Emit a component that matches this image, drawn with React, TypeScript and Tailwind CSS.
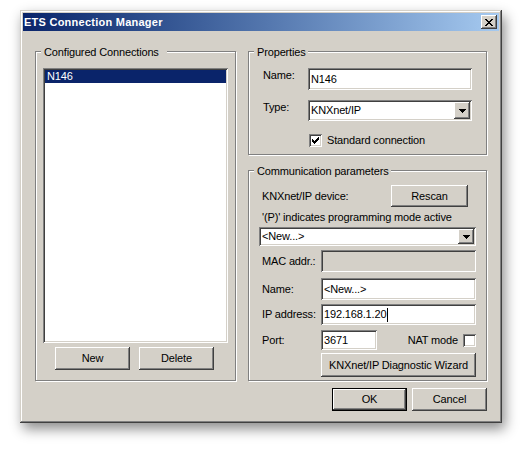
import React from "react";

const sunken =
  "shadow-[inset_1px_1px_0_#808080,inset_-1px_-1px_0_#ffffff,inset_2px_2px_0_#404040,inset_-2px_-2px_0_#d4d0c8]";
const raised =
  "shadow-[inset_-1px_-1px_0_#404040,inset_1px_1px_0_#ffffff,inset_-2px_-2px_0_#808080,inset_2px_2px_0_#d4d0c8]";
const etched =
  "border border-[#808080] shadow-[inset_1px_1px_0_#ffffff,1px_1px_0_#ffffff]";

function Btn({
  children,
  className,
  def,
}: {
  children?: React.ReactNode;
  className: string;
  def?: boolean;
}) {
  return (
    <div
      className={`bg-[#d4d0c8] ${def ? "border border-black" : ""} ${className}`}
    >
      <div
        className={`w-full h-full flex items-center justify-center whitespace-nowrap ${raised}`}
      >
        {children}
      </div>
    </div>
  );
}

function Field({
  children,
  className,
  disabled,
}: {
  children?: React.ReactNode;
  className: string;
  disabled?: boolean;
}) {
  return (
    <div
      className={`flex items-center pl-[3px] whitespace-nowrap ${
        disabled ? "bg-[#d4d0c8]" : "bg-white"
      } ${sunken} ${className}`}
    >
      {children}
    </div>
  );
}

function Arrow() {
  return (
    <svg width="7" height="4" viewBox="0 0 7 4" shapeRendering="crispEdges">
      <path d="M0 0h7v1H0zM1 1h5v1H1zM2 2h3v1H2zM3 3h1v1H3z" fill="#000" />
    </svg>
  );
}

function Combo({ text, className }: { text: string; className: string }) {
  return (
    <div className={`flex p-[2px] bg-white ${sunken} ${className}`}>
      <div className="flex-1 flex items-center pl-[1px] whitespace-nowrap">
        {text}
      </div>
      <div className={`w-[16px] h-full flex items-center justify-center bg-[#d4d0c8] ${raised}`}>
        <Arrow />
      </div>
    </div>
  );
}

function Check({ checked }: { checked?: boolean }) {
  return (
    <div
      className={`w-[13px] h-[13px] shrink-0 bg-white flex items-center justify-center ${sunken}`}
    >
      {checked && (
        <svg width="7" height="7" viewBox="0 0 7 7" shapeRendering="crispEdges">
          <path
            d="M6 0h1v1H6zM5 1h2v1H5zM0 2h1v1H0zM4 2h3v1H4zM0 3h2v1H0zM3 3h3v1H3zM0 4h5v1H0zM1 5h3v1H1zM2 6h1v1H2z"
            fill="#000"
          />
        </svg>
      )}
    </div>
  );
}

export default function App() {
  return (
    <div className="w-[522px] h-[453px] bg-white pt-[10px] pl-[20px] font-['Liberation_Sans',Arial,sans-serif] text-[11px] leading-[13px] tracking-[-0.15px] text-black">
      <div className="w-[482px] h-[413px] bg-[#d4d0c8] p-[3px] shadow-[inset_-1px_-1px_0_#404040,inset_1px_1px_0_#d4d0c8,inset_-2px_-2px_0_#808080,inset_2px_2px_0_#ffffff,3px_6px_12px_rgba(0,0,0,0.45)]">
        {/* Title bar */}
        <div className="h-[18px] flex items-center justify-between bg-linear-to-r from-[#0a246a] to-[#a6caf0] pl-[1px] pr-[2px]">
          <span className="font-bold text-white tracking-[0.25px] leading-[18px] whitespace-nowrap">
            ETS Connection Manager
          </span>
          <div className={`w-[16px] h-[14px] bg-[#d4d0c8] flex items-center justify-center ${raised}`}>
            <svg width="8" height="7" viewBox="0 0 8 7" shapeRendering="crispEdges">
              <path
                d="M0 0h2v1H0zM6 0h2v1H6zM1 1h2v1H1zM5 1h2v1H5zM2 2h4v1H2zM3 3h2v1H3zM2 4h4v1H2zM1 5h2v1H1zM5 5h2v1H5zM0 6h2v1H0zM6 6h2v1H6z"
                fill="#000"
              />
            </svg>
          </div>
        </div>

        {/* Client area */}
        <div className="mt-[1px] flex pl-[12px] pt-[19px]">
          {/* Configured Connections */}
          <div className={`relative w-[201px] h-[330px] ${etched} pl-[7px] pt-[16px]`}>
            <span className="absolute left-[5px] top-[-6px] bg-[#d4d0c8] pl-[3px] pr-[8px] whitespace-nowrap">
              Configured Connections
            </span>
            <div className={`w-[185px] h-[275px] bg-white p-[2px] ${sunken}`}>
              <div className="h-[13px] bg-[#0a246a] text-white pl-[2px] leading-[13px]">
                N146
              </div>
            </div>
            <div className="flex mt-[4px] ml-[12px] gap-[9px]">
              <Btn className="w-[75px] h-[23px]">New</Btn>
              <Btn className="w-[75px] h-[23px]">Delete</Btn>
            </div>
          </div>

          {/* Right column */}
          <div className="ml-[12px] w-[239px] flex flex-col">
            {/* Properties */}
            <div className={`relative w-[239px] h-[104px] ${etched} pl-[14px] pt-[16px]`}>
              <span className="absolute left-[5px] top-[-6px] bg-[#d4d0c8] pl-[3px] pr-[2px] whitespace-nowrap">
                Properties
              </span>
              <div className="flex items-start">
                <span className="w-[45px] pt-[1px]">Name:</span>
                <Field className="w-[164px] h-[22px]">N146</Field>
              </div>
              <div className="flex items-start mt-[10px]">
                <span className="w-[45px] pt-[1px]">Type:</span>
                <Combo className="w-[164px] h-[21px]" text="KNXnet/IP" />
              </div>
              <div className="flex items-center mt-[13px] ml-[46px]">
                <Check checked />
                <span className="ml-[5px] whitespace-nowrap">Standard connection</span>
              </div>
            </div>

            {/* Communication parameters */}
            <div className={`relative mt-[15px] w-[239px] h-[211px] ${etched} pt-[14px]`}>
              <span className="absolute left-[5px] top-[-6px] bg-[#d4d0c8] pl-[3px] pr-[2px] whitespace-nowrap">
                Communication parameters
              </span>
              <div className="flex items-center pl-[13px]">
                <span className="w-[129px] whitespace-nowrap">KNXnet/IP device:</span>
                <Btn className="w-[77px] h-[22px]">Rescan</Btn>
              </div>
              <div className="mt-[4px] pl-[13px] whitespace-nowrap">
                '(P)' indicates programming mode active
              </div>
              <div className="mt-[3px] pl-[10px]">
                <Combo className="w-[217px] h-[19px]" text="<New...>" />
              </div>
              <div className="mt-[4px] flex items-center pl-[13px]">
                <span className="w-[59px] whitespace-nowrap">MAC addr.:</span>
                <Field className="w-[155px] h-[22px]" disabled />
              </div>
              <div className="mt-[6px] flex items-center pl-[13px]">
                <span className="w-[59px] whitespace-nowrap">Name:</span>
                <Field className="w-[155px] h-[22px]">&lt;New...&gt;</Field>
              </div>
              <div className="mt-[4px] flex items-center pl-[13px]">
                <span className="w-[59px] whitespace-nowrap">IP address:</span>
                <Field className="w-[155px] h-[21px]">
                  192.168.1.20
                  <span className="inline-block w-[1px] h-[14px] bg-black ml-[1px]" />
                </Field>
              </div>
              <div className="mt-[5px] ml-[13px] w-[214px] flex items-center">
                <span className="w-[59px] whitespace-nowrap">Port:</span>
                <Field className="w-[56px] h-[20px]">3671</Field>
                <div className="ml-auto flex items-center">
                  <span className="whitespace-nowrap">NAT mode</span>
                  <div className="ml-[5px]">
                    <Check />
                  </div>
                </div>
              </div>
              <div className="mt-[3px] ml-[72px]">
                <Btn className="w-[155px] h-[24px]">KNXnet/IP Diagnostic Wizard</Btn>
              </div>
            </div>

            {/* OK / Cancel */}
            <div className="mt-[7px] flex justify-end gap-[5px]">
              <Btn className="w-[75px] h-[23px]" def>
                OK
              </Btn>
              <Btn className="w-[75px] h-[23px]">Cancel</Btn>
            </div>
          </div>
        </div>
      </div>
    </div>
  );
}
